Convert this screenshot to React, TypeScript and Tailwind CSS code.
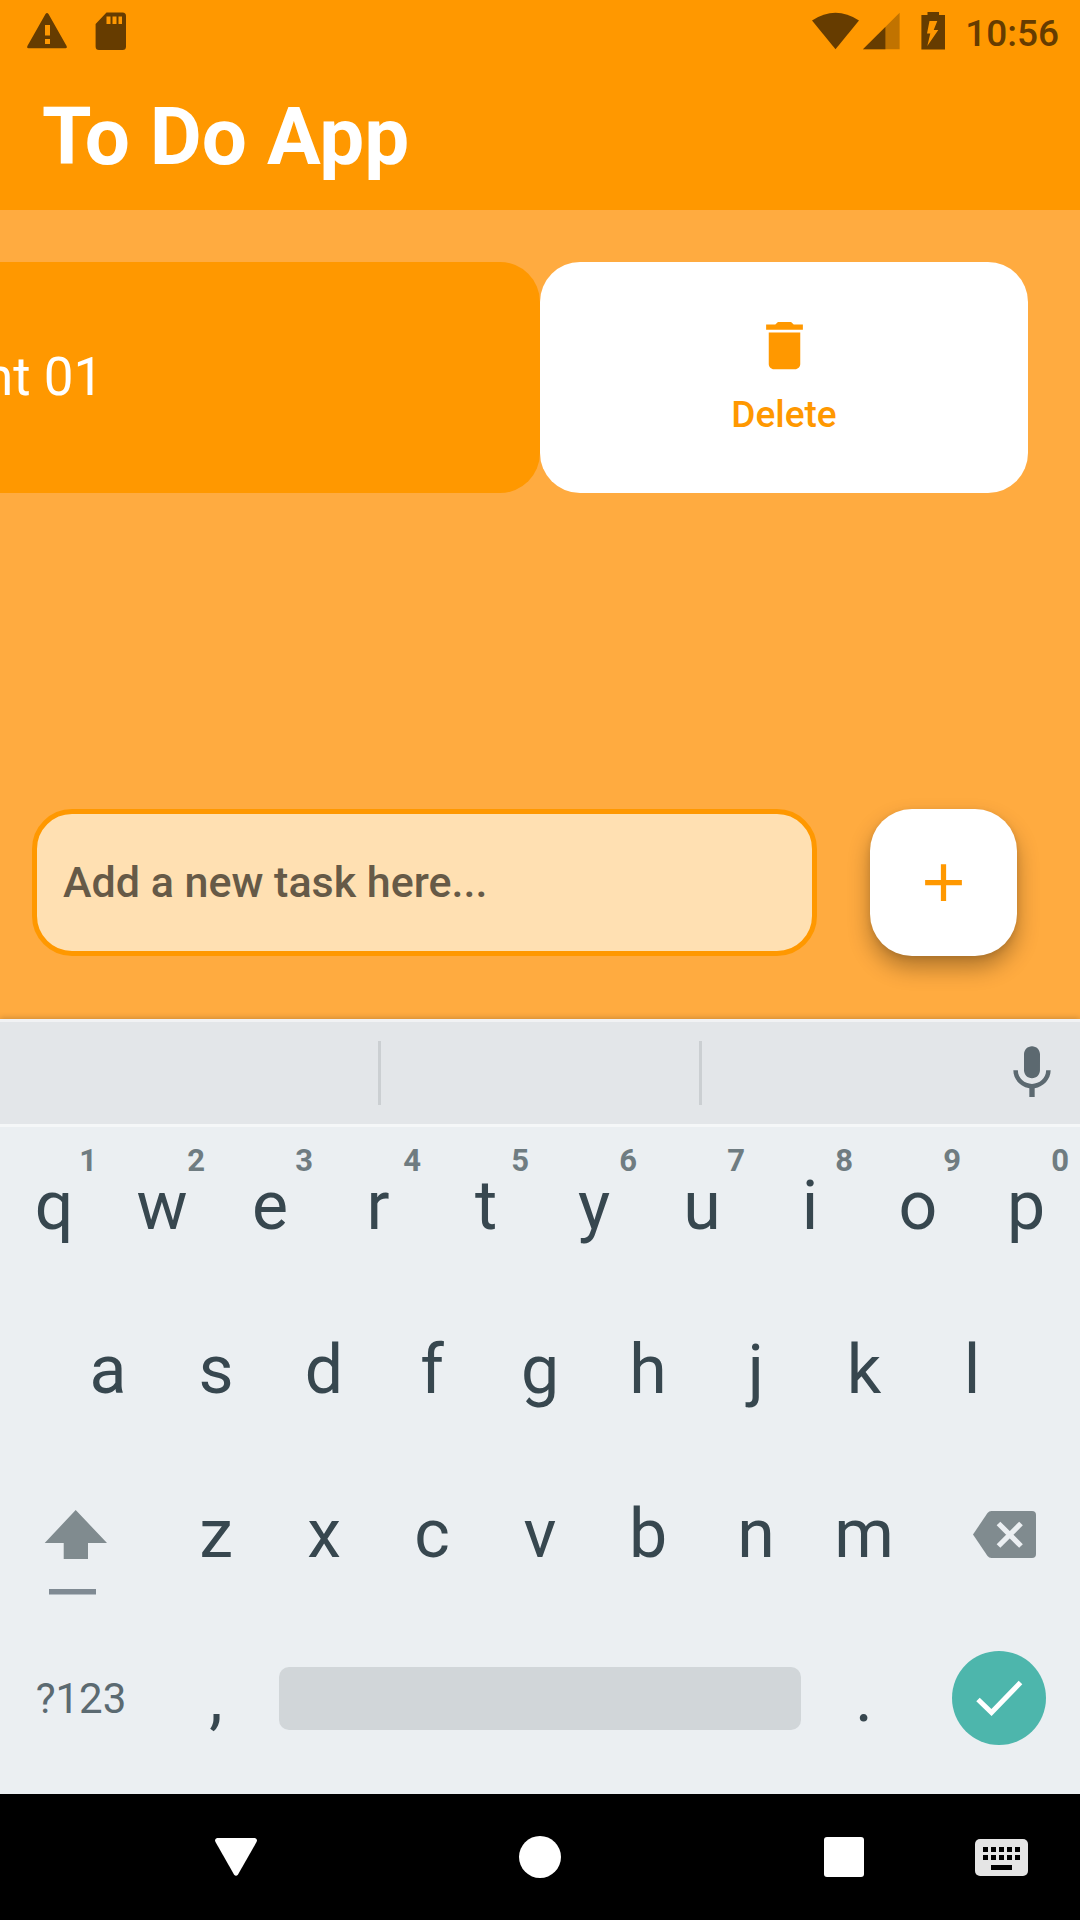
import React from "react";

const KEY = "flex h-[164px] items-center justify-center leading-none text-[68px] text-[#37474f]";

function StatusBar() {
  return (
    <div className="flex h-[63px] items-start justify-between pl-[27px] pr-[21px] pt-3 text-[#663c00]">
      <div className="flex items-start gap-7">
        <svg className="h-[38px] w-10" viewBox="0 0 40 38" aria-label="Warning">
          <path
            fill="currentColor"
            fillRule="evenodd"
            d="M18.5 2Q20 0 21.5 2L39.6 34Q40.4 36.3 38.5 36.3H1.5Q-.4 36.3 .4 34ZM18 13V23.5H23V13ZM18 27V32H23V27Z"
          />
        </svg>
        <svg className="h-[38px] w-8" viewBox="0 0 32 38" aria-label="Memory card">
          <path
            fill="currentColor"
            fillRule="evenodd"
            d="M11.5.6H27.5Q31 .8 31 4V34.5Q31 38 27.5 38H4Q.6 38 .6 34.5V12ZM11.5 4.5V12H15.5V4.5ZM17.5 4.5V12H21.5V4.5ZM23.5 4.5V12H27V4.5Z"
          />
        </svg>
      </div>
      <div className="flex items-start">
        <svg className="h-[38px] w-[47px]" viewBox="0 0 47 38" aria-label="Wi-Fi">
          <path fill="currentColor" d="M0 8.5Q23.5-7 47 8.5L23.5 37.3Z" />
        </svg>
        <svg className="ml-1 h-[38px] w-[37px]" viewBox="0 0 37 38" aria-label="Signal">
          <path fill="#c17300" d="M0 37.3 36.6.7V37.3Z" />
          <path fill="currentColor" d="M0 37.3 22.4 15V37.3Z" />
        </svg>
        <svg className="ml-[21px] h-[38px] w-6" viewBox="0 0 24 38" aria-label="Battery charging">
          <path
            fill="currentColor"
            fillRule="evenodd"
            d="M6.5 0H18V3H24V37.6H.4V3H6.5ZM8.5 9 6 21.5H9.3L6.3 34 17.3 18H12.7L16.3 9Z"
          />
        </svg>
        <span className="ml-5 text-[37px] font-medium leading-[44px]">10:56</span>
      </div>
    </div>
  );
}

function TaskRow() {
  return (
    <div className="grid grid-cols-2 pt-[52px]">
      <div className="flex h-[231px] items-center overflow-hidden rounded-r-[40px] bg-[#ff9800]">
        <span className="-ml-4 whitespace-pre text-[53px] text-white">nt 01</span>
      </div>
      <button
        type="button"
        className="mr-[52px] flex h-[231px] flex-col items-center justify-center gap-3 rounded-[40px] bg-white text-[#ff9800]"
      >
        <svg className="size-[63px]" viewBox="0 0 24 24" fill="currentColor" aria-hidden="true">
          <path d="M6 19c0 1.1.9 2 2 2h8c1.1 0 2-.9 2-2V7H6v12zM19 4h-3.5l-1-1h-5l-1 1H5v2h14V4z" />
        </svg>
        <span className="text-[37px] font-medium leading-[52px]">Delete</span>
      </button>
    </div>
  );
}

function AddTask() {
  return (
    <form className="mt-auto flex gap-[53px] pb-[63px] pl-8 pr-[63px]" onSubmit={(e) => e.preventDefault()}>
      <input
        type="text"
        aria-label="New task"
        placeholder="Add a new task here..."
        className="h-[147px] min-w-0 flex-1 rounded-[40px] border-5 border-[#ff9800] bg-[#ffe0b2] px-[26px] pb-0.5 text-[43px] font-medium text-[#665a47] outline-none placeholder:text-[#665a47]"
      />
      <button
        type="button"
        aria-label="Add task"
        className="flex size-[147px] shrink-0 items-center justify-center rounded-[42px] bg-white text-[#ff9800] shadow-[0_12px_22px_rgba(0,0,0,0.3),0_2px_6px_rgba(0,0,0,0.1)]"
      >
        <svg className="size-[63px]" viewBox="0 0 24 24" fill="currentColor" aria-hidden="true">
          <path d="M19 13h-6v6h-2v-6H5v-2h6V5h2v6h6v2z" />
        </svg>
      </button>
    </form>
  );
}

function Letter({ char, hint }: { char: string; hint?: string }) {
  return (
    <button type="button" className={`${KEY} relative flex-1`}>
      {char}
      {hint && (
        <span className="absolute right-[11px] top-5 text-[31px] font-bold leading-[34px] text-[#6f7c81]">{hint}</span>
      )}
    </button>
  );
}

function Keyboard() {
  return (
    <div className="relative bg-[#ebeff2] pb-3.5 shadow-[0_-1px_6px_rgba(0,0,0,0.2)]">
      <div className="flex h-[105px] items-center bg-[#e3e6e9] pl-[60px] pt-[3px] shadow-[inset_0_3px_0_#f1f2f4]">
        <div className="flex h-16 flex-1">
          <div className="flex-1 border-r-3 border-[#cbcfd2]" />
          <div className="flex-1 border-r-3 border-[#cbcfd2]" />
          <div className="flex-1" />
        </div>
        <button type="button" aria-label="Voice input" className="-ml-5 flex w-20 shrink-0 items-center text-[#5c6970]">
          <svg className="size-16" viewBox="0 0 24 24" fill="currentColor" aria-hidden="true">
            <path d="M12 14c1.66 0 2.99-1.34 2.99-3L15 5c0-1.66-1.34-3-3-3S9 3.34 9 5v6c0 1.66 1.34 3 3 3zm5.3-3c0 3-2.54 5.1-5.3 5.1S6.7 14 6.7 11H5c0 3.41 2.72 6.23 6 6.72V21h2v-3.28c3.28-.48 6-3.3 6-6.72h-1.7z" />
          </svg>
        </button>
      </div>

      <div className="shadow-[inset_0_3px_0_#f5f7f8]">
        <div className="flex">
          {"qwertyuiop".split("").map((c, i) => (
            <Letter key={c} char={c} hint={String((i + 1) % 10)} />
          ))}
        </div>
        <div className="flex px-[5%]">
          {"asdfghjkl".split("").map((c) => (
            <Letter key={c} char={c} />
          ))}
        </div>
        <div className="flex">
          <button type="button" aria-label="Shift" className="flex w-[15%] items-center pl-11 pt-9">
            <svg className="h-[86px] w-16" viewBox="44 1509 64 86" aria-hidden="true">
              <path fill="#808b8f" d="M75.7 1510 107 1543H88V1559H63.7V1543H44.7Z" />
              <path fill="#7f8a93" d="M49 1589H96V1594.5H49Z" />
            </svg>
          </button>
          <div className="flex flex-1">
            {"zxcvbnm".split("").map((c) => (
              <Letter key={c} char={c} />
            ))}
          </div>
          <button type="button" aria-label="Backspace" className="flex w-[15%] items-center justify-end pr-11">
            <svg className="h-[47px] w-[63px]" viewBox="0 0 63 47" aria-hidden="true">
              <path fill="#808b8f" d="M18.5 0H59Q63 0 63 4V43Q63 47 59 47H18.5Q16 47 14.5 45L0 23.5 14.5 2Q16 0 18.5 0Z" />
              <path stroke="#ebeff2" strokeWidth="5.2" fill="none" d="M25.5 12.5 48 35M48 12.5 25.5 35" />
            </svg>
          </button>
        </div>
        <div className="flex h-[164px] items-center">
          <button type="button" className="w-[15%] text-[42px] text-[#5b6a71]">?123</button>
          <button type="button" className={`${KEY} w-[10%]`}>,</button>
          <div className="flex-1 px-[9px]">
            <button type="button" aria-label="Space" className="block h-[63px] w-full rounded-[10px] bg-[#d1d6d9]" />
          </div>
          <button type="button" className={`${KEY} w-[10%]`}>.</button>
          <div className="flex w-[15%] justify-center">
            <button type="button" aria-label="Done" className="flex size-[94px] items-center justify-center rounded-full bg-[#4db6ac]">
              <svg className="h-9 w-12" viewBox="0 0 48 36" fill="none" stroke="#fff" strokeWidth="5" aria-hidden="true">
                <path d="M3 19.5 16.500 32.5 45.5 2.5" />
              </svg>
            </button>
          </div>
        </div>
      </div>
    </div>
  );
}

function NavBar() {
  return (
    <nav className="flex h-[126px] items-center bg-black pl-[158px]">
      <div className="flex flex-1 justify-between">
        <button type="button" aria-label="Back" className="flex w-[156px] justify-center">
          <svg className="size-[42px]" viewBox="0 0 42 42" fill="#fff" aria-hidden="true">
            <path d="M2 2H40Q43 3 41.5 6L23 38.5Q21 41 19 38.5L.5 6Q-1 3 2 2Z" />
          </svg>
        </button>
        <button type="button" aria-label="Home" className="flex w-[156px] justify-center">
          <span className="size-[42px] rounded-full bg-white" />
        </button>
        <button type="button" aria-label="Recent apps" className="flex w-[156px] items-center justify-center">
          <span className="size-10 rounded-[3px] bg-white" />
        </button>
      </div>
      <button type="button" aria-label="Switch keyboard" className="flex w-[158px] justify-center">
        <svg className="h-[37px] w-[53px]" viewBox="0 0 53 37" aria-hidden="true">
          <rect width="53" height="37" rx="5" fill="#e5e5e5" />
          {[8, 16, 24, 32, 40].map((x) => (
            <g key={x}>
              <rect x={x} y="8" width="5" height="5" />
              <rect x={x} y="16" width="5" height="5" />
            </g>
          ))}
          <rect x="16" y="26" width="21" height="5" />
        </svg>
      </button>
    </nav>
  );
}

export default function App() {
  return (
    <div className="flex min-h-screen flex-col overflow-hidden bg-[#ffab40] font-['Roboto',sans-serif]">
      <header className="bg-[#ff9800]">
        <StatusBar />
        <div className="flex h-[147px] items-center px-[42px]">
          <h1 className="text-[80px] font-bold leading-none text-white">To Do App</h1>
        </div>
      </header>
      <main className="flex flex-1 flex-col">
        <TaskRow />
        <AddTask />
      </main>
      <Keyboard />
      <NavBar />
    </div>
  );
}
